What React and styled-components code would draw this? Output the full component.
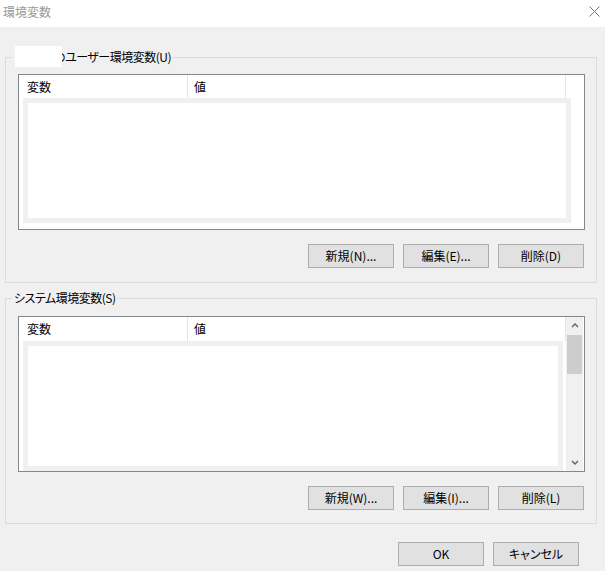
import React from 'react';
import styled, { createGlobalStyle } from 'styled-components';

const GlobalStyle = createGlobalStyle`
  body {
    margin: 0;
    background: #f0f0f0;
  }
`;

const Window = styled.div`
  width: 605px;
  height: 571px;
  overflow: hidden;
  background: #f0f0f0;
  font-family: 'Noto Sans CJK JP', 'Noto Sans', sans-serif;
  font-size: 12px;
  font-feature-settings: 'palt';
  color: #000;
`;

const TitleBar = styled.div`
  height: 27px;
  background: #fff;
  display: flex;
  align-items: flex-start;
  justify-content: space-between;
  padding: 0 5px 0 3px;
  box-sizing: border-box;
`;

const Title = styled.span`
  margin-top: 4px;
  line-height: 16px;
  color: #999;
`;

const CloseIcon = styled.svg`
  margin-top: 6px;
  width: 11px;
  height: 11px;
`;

const Content = styled.div`
  padding: 30px 8px 0 5px;
`;

const Group = styled.div`
  position: relative;
  width: 592px;
  box-sizing: border-box;
  margin-top: ${(p) => p.$gap || 0}px;
  border: 1px solid #dcdcdc;
  padding: ${(p) => p.$top}px 11px ${(p) => p.$bottom}px 12px;
  display: flex;
  flex-direction: column;
  gap: 14px;
`;

/* label sitting on the group's top border */
const Legend = styled.span`
  position: absolute;
  top: -9px;
  left: 6px;
  padding: 0 2px;
  background: #f0f0f0;
  line-height: 16px;
  letter-spacing: -0.5px;
  white-space: nowrap;
`;

/* user name blanked out in the screenshot */
const Redaction = styled.span`
  display: inline-block;
  position: relative;
  z-index: 1;
  top: 3px;
  width: 47px;
  height: 21px;
  margin: -6px -8px 0 1px;
  background: #fff;
  vertical-align: top;
`;

const ListBox = styled.div`
  height: 156px;
  box-sizing: border-box;
  border: 1px solid #828790;
  background: #fff;
  display: flex;
  overflow: hidden;
`;

const ListMain = styled.div`
  flex: 1;
  min-width: 0;
  display: flex;
  flex-direction: column;
`;

const Header = styled.div`
  display: flex;
  flex-shrink: 0;
  height: ${(p) => p.$h}px;
  line-height: ${(p) => p.$h}px;
`;

const HeaderCell = styled.div`
  box-sizing: border-box;
  width: ${(p) => (p.$w ? `${p.$w}px` : 'auto')};
  flex: ${(p) => (p.$w ? 'none' : 1)};
  padding-left: ${(p) => p.$pad}px;
  border-right: 1px solid #e5e5e5;
`;

const ListBody = styled.div`
  flex: 1;
`;

const Inner = styled.div`
  margin-left: 4px;
  width: ${(p) => p.$w}px;
  height: ${(p) => p.$h}px;
  box-sizing: border-box;
  border: 5px solid #f0f0f0;
  background: #fff;
`;

const Gutter = styled.div`
  width: 18px;
  flex-shrink: 0;
`;

const Scrollbar = styled.div`
  width: 17px;
  flex-shrink: 0;
  margin-right: 1px;
  background: #f0f0f0;
  display: flex;
  flex-direction: column;
`;

const Arrow = styled.div`
  height: 17px;
  display: flex;
  align-items: center;
  justify-content: center;
`;

const Track = styled.div`
  flex: 1;
  padding: 1px 1px 0;
`;

const Thumb = styled.div`
  height: 39px;
  background: #cdcdcd;
`;

const ButtonRow = styled.div`
  display: flex;
  justify-content: flex-end;
  gap: 9px;
  padding-right: ${(p) => p.$right || 1}px;
  padding-top: ${(p) => p.$top || 0}px;
`;

const Button = styled.button`
  width: 86px;
  height: 24px;
  box-sizing: border-box;
  padding: 0;
  border: 1px solid #adadad;
  background: #e1e1e1;
  font: inherit;
  font-feature-settings: 'palt';
  color: #000;
  line-height: 20px;
`;

const Chevron = ({ down }) => (
  <svg width="8" height="5" viewBox="0 0 8 5">
    <path
      d={down ? 'M1 1 L4 4 L7 1' : 'M1 4 L4 1 L7 4'}
      fill="none"
      stroke="#606060"
      strokeWidth="1.4"
    />
  </svg>
);

const VarList = ({ header, inner, scroll }) => (
  <ListBox>
    <ListMain>
      <Header $h={header}>
        <HeaderCell $w={169} $pad={8}>変数</HeaderCell>
        <HeaderCell $pad={6}>値</HeaderCell>
      </Header>
      <ListBody>
        <Inner $w={inner.w} $h={inner.h} />
      </ListBody>
    </ListMain>
    {scroll ? (
      <Scrollbar>
        <Arrow>
          <Chevron />
        </Arrow>
        <Track>
          <Thumb />
        </Track>
        <Arrow>
          <Chevron down />
        </Arrow>
      </Scrollbar>
    ) : (
      <Gutter />
    )}
  </ListBox>
);

export default function App() {
  return (
    <Window>
      <GlobalStyle />
      <TitleBar>
        <Title>環境変数</Title>
        <CloseIcon viewBox="0 0 11 11">
          <path d="M0.5 0.5 L10.5 10.5 M10.5 0.5 L0.5 10.5" stroke="#777" strokeWidth="1" />
        </CloseIcon>
      </TitleBar>
      <Content>
        <Group $top={16} $bottom={14}>
          <Legend>
            <Redaction />
            のユーザー環境変数(U)
          </Legend>
          <VarList header={23} inner={{ w: 548, h: 125 }} />
          <ButtonRow>
            <Button>新規(N)...</Button>
            <Button>編集(E)...</Button>
            <Button>削除(D)</Button>
          </ButtonRow>
        </Group>
        <Group $gap={15} $top={17} $bottom={13}>
          <Legend>システム環境変数(S)</Legend>
          <VarList header={24} inner={{ w: 540, h: 130 }} scroll />
          <ButtonRow>
            <Button>新規(W)...</Button>
            <Button>編集(I)...</Button>
            <Button>削除(L)</Button>
          </ButtonRow>
        </Group>
        <ButtonRow $top={18} $right={18}>
          <Button>OK</Button>
          <Button>キャンセル</Button>
        </ButtonRow>
      </Content>
    </Window>
  );
}
